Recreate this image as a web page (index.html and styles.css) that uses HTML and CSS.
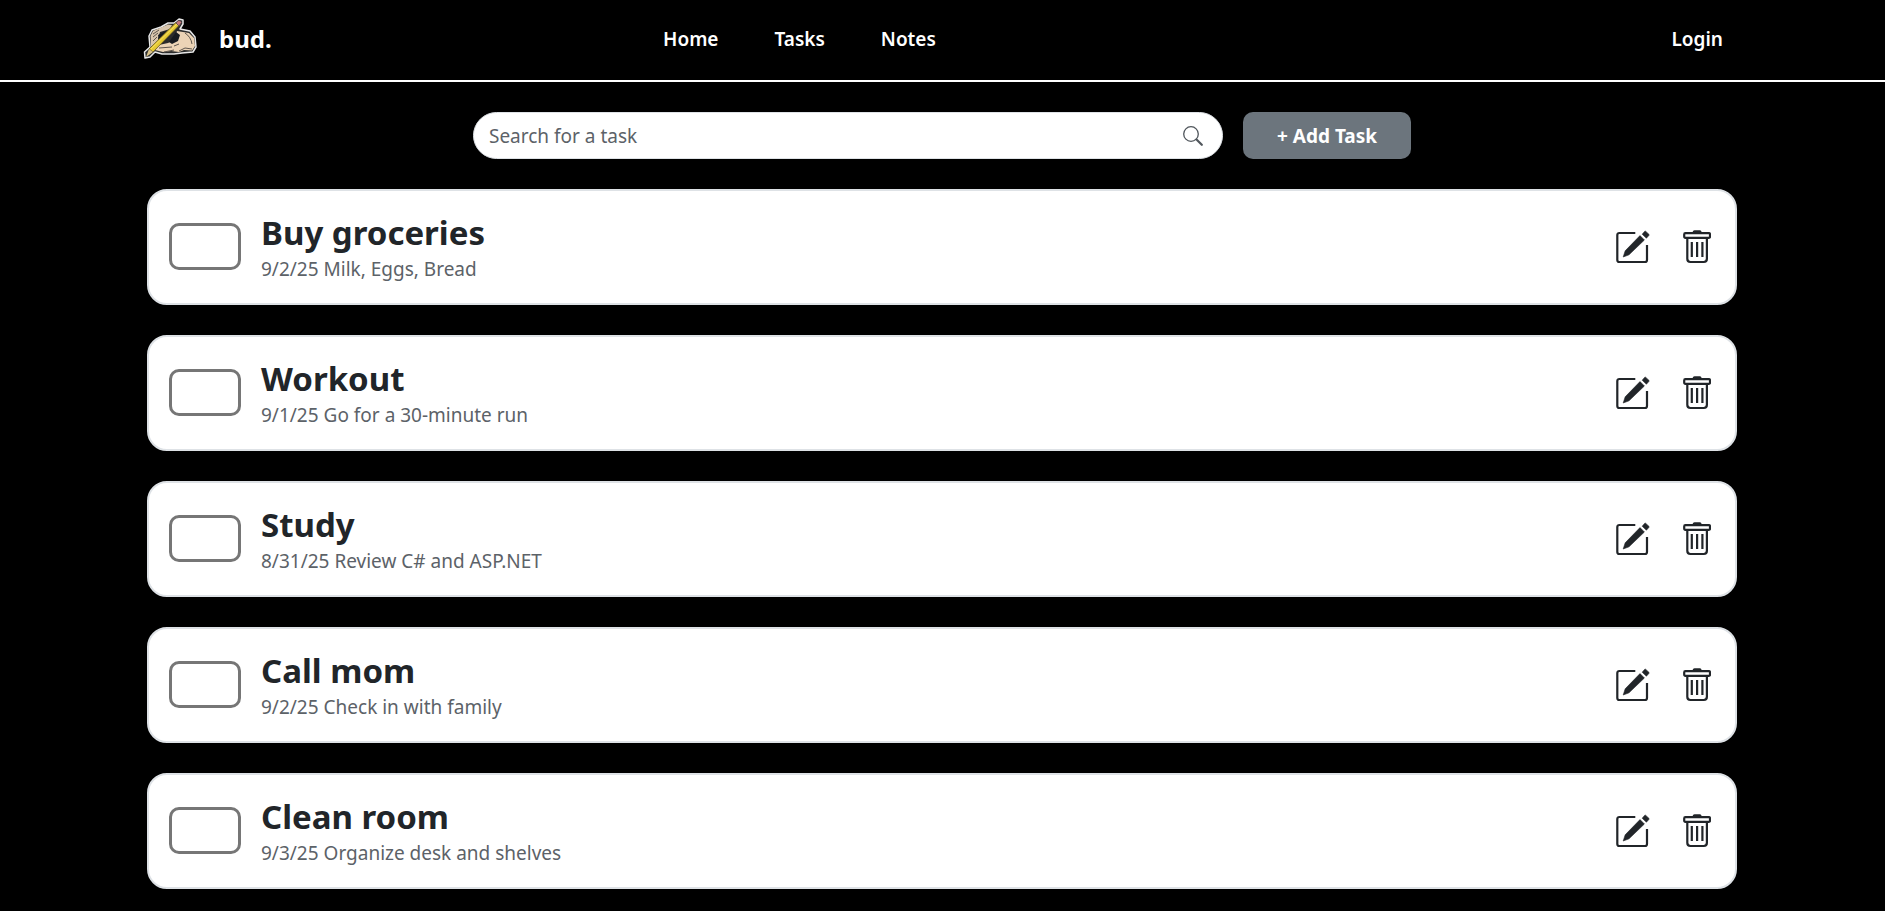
FILE: index.html
```
<!DOCTYPE html>
<html lang="en">
<head>
<meta charset="utf-8">
<meta name="viewport" content="width=device-width, initial-scale=1">
<title>bud.</title>
<link rel="stylesheet" href="styles.css">
</head>
<body>
<svg class="sprite" aria-hidden="true">
  <symbol id="edit" viewBox="0 0 34 34">
    <path d="M19.3 3H3.3a2 2 0 0 0-2 2v25a2 2 0 0 0 2 2H29a2 2 0 0 0 2-2V15" fill="none" stroke="currentColor" stroke-width="2.200"/>
    <path d="M24 5.600 28.400 10 13 24.800 7.200 27 9.200 20.800ZM26.200 4.200 28.600 1.400Q29.200.8 29.800 1.400L33 4.400Q33.400 5 32.800 5.600L30.400 8.200Z" fill="currentColor" stroke="currentColor" stroke-width=".6"/>
  </symbol>
  <symbol id="trash" viewBox="0 0 28 34">
    <path d="M9.400 3.200Q9.600.2 11.600.2H16.800Q18.600.2 18.800 3.200Z" fill="currentColor"/>
    <path d="M2.400 3.200H25.800Q27 3.200 27 4.400V6.600Q27 7.800 25.800 7.800H2.400Q1.200 7.800 1.200 6.600V4.400Q1.200 3.200 2.400 3.200ZM4.300 8V28.800Q4.300 32 7.400 32H20.800Q23.900 32 23.900 28.800V8M8.800 12V27M14.100 12V27M19.400 12V27" fill="none" stroke="currentColor" stroke-width="2.200"/>
  </symbol>
</svg>
<header class="topbar">
  <a class="brand" href="#">
    <svg class="logo" viewBox="0 0 60 48" aria-hidden="true">
      <path d="M4 43 3.500 37 9 32 8 21 11 15 20 12 27 8 33 8 38 4 42 5 42 9 39 14 49 16 54 22 55 32 52 37 41 38 33 39 21 39 14 37 9 42Z" fill="#2b2c2c" stroke="#e8e8e8" stroke-width="1.500" stroke-linejoin="round"/>
      <path d="M10 31 9.500 21 12 16 27 9.500 31 10 29 14 19 17 17 23 17 27 13 33Z" fill="#d9c6ad"/>
      <path d="M36 16 48 18 53 23 54 31 51 35.500 43 35 38 37 30 36 22 37 14 35 18 30 27 28 33 25Z" fill="#ecd4b6"/>
      <path d="M17 20 25 16 27 18 19 28ZM28 27 35 17 39 20 37 26 31 29Z" fill="#171b20"/>
      <path d="M12 19 18 15M12 22 17 18M12 26 16 22M13 30 16 27M18 33 31 32M23 37 33 35M38 36 44 33 51 34M33 31 38 29M44 18Q50 22 51 29" fill="none" stroke="#5d554d" stroke-width="1"/>
      <path d="M8 34 35 7.500 38 10.500 12 37Z" fill="#e6c932" stroke="#665725" stroke-width=".8"/>
      <path d="m10 34 26-25" stroke="#f5df65" stroke-width="1"/>
      <path d="M8 34 5 42 12 37Z" fill="#dbc38a"/>
      <path d="m35 8 2-2.500q3-.5 3.500 2L38 11Z" fill="#c5767b" stroke="#55474a" stroke-width=".8"/>
    </svg>
    <span>bud.</span>
  </a>
  <nav class="nav">
    <a href="#">Home</a>
    <a href="#">Tasks</a>
    <a href="#">Notes</a>
  </nav>
  <a class="login" href="#">Login</a>
</header>
<main class="page">
  <div class="toolbar">
    <form class="search" role="search">
      <input type="search" placeholder="Search for a task" aria-label="Search for a task">
      <button type="button" aria-label="Search">
        <svg viewBox="0 0 20 20" aria-hidden="true"><circle cx="8" cy="8" r="7.300" fill="none" stroke="currentColor" stroke-width="1.300"/><path d="m13.500 13.500 5.300 5.300" fill="none" stroke="currentColor" stroke-width="2.200" stroke-linecap="round"/></svg>
      </button>
    </form>
    <button class="add" type="button">+ Add Task</button>
  </div>
  <ul class="tasks">
    <li class="task">
      <input class="check" type="checkbox" id="t1">
      <div class="info"><label class="title" for="t1">Buy groceries</label><p class="note">9/2/25 Milk, Eggs, Bread</p></div>
      <div class="actions"><button type="button" aria-label="Edit"><svg class="edit"><use href="#edit"/></svg></button><button type="button" aria-label="Delete"><svg class="trash"><use href="#trash"/></svg></button></div>
    </li>
    <li class="task">
      <input class="check" type="checkbox" id="t2">
      <div class="info"><label class="title" for="t2">Workout</label><p class="note">9/1/25 Go for a 30-minute run</p></div>
      <div class="actions"><button type="button" aria-label="Edit"><svg class="edit"><use href="#edit"/></svg></button><button type="button" aria-label="Delete"><svg class="trash"><use href="#trash"/></svg></button></div>
    </li>
    <li class="task">
      <input class="check" type="checkbox" id="t3">
      <div class="info"><label class="title" for="t3">Study</label><p class="note">8/31/25 Review C# and ASP.NET</p></div>
      <div class="actions"><button type="button" aria-label="Edit"><svg class="edit"><use href="#edit"/></svg></button><button type="button" aria-label="Delete"><svg class="trash"><use href="#trash"/></svg></button></div>
    </li>
    <li class="task">
      <input class="check" type="checkbox" id="t4">
      <div class="info"><label class="title" for="t4">Call mom</label><p class="note">9/2/25 Check in with family</p></div>
      <div class="actions"><button type="button" aria-label="Edit"><svg class="edit"><use href="#edit"/></svg></button><button type="button" aria-label="Delete"><svg class="trash"><use href="#trash"/></svg></button></div>
    </li>
    <li class="task">
      <input class="check" type="checkbox" id="t5">
      <div class="info"><label class="title" for="t5">Clean room</label><p class="note">9/3/25 Organize desk and shelves</p></div>
      <div class="actions"><button type="button" aria-label="Edit"><svg class="edit"><use href="#edit"/></svg></button><button type="button" aria-label="Delete"><svg class="trash"><use href="#trash"/></svg></button></div>
    </li>
  </ul>
</main>
</body>
</html>
```
FILE: styles.css
```
* {
  box-sizing: border-box;
}

body {
  margin: 0;
  background: #000;
  color: #212529;
  font-family: "Segoe UI", "Noto Sans", sans-serif;
  font-size: 19px;
  line-height: 28px;
}

button,
input {
  font: inherit;
}

.sprite {
  position: absolute;
  width: 0;
  height: 0;
}

.topbar {
  display: flex;
  align-items: center;
  padding: 15px 162px 17px 141px;
  border-bottom: 2px solid #fff;
  font-weight: 600;
}

.topbar a {
  color: #fff;
  text-decoration: none;
}

.brand {
  display: flex;
  flex: 0 0 33%;
  align-items: center;
  gap: 18px;
  font-size: 24px;
  font-weight: 700;
}

.logo {
  width: 60px;
  height: 48px;
}

.nav {
  display: flex;
  flex: 1;
  gap: 56px;
}

.page {
  padding: 30px 148px 0 147px;
}

.toolbar {
  display: flex;
  justify-content: center;
  gap: 20px;
  margin-bottom: 30px;
}

.search {
  display: flex;
  flex: 0 1 750px;
  align-items: center;
  padding: 0 19px 0 15px;
  border: 1px solid #dee2e6;
  border-radius: 24px;
  background: #fff;
}

.search input {
  flex: 1;
  min-width: 0;
  padding: 0;
  border: 0;
  outline: 0;
  background: none;
  color: #212529;
}

.search input::placeholder {
  color: #5c6268;
  opacity: 1;
}

.search button {
  display: flex;
  padding: 0;
  border: 0;
  background: none;
  color: #50565c;
}

.search svg {
  width: 20px;
  height: 20px;
}

.add {
  height: 47px;
  padding: 0 34px;
  border: 0;
  border-radius: 10px;
  background: #6c757d;
  color: #fff;
  font-weight: 700;
}

.tasks {
  display: grid;
  gap: 30px;
  margin: 0;
  padding: 0;
  list-style: none;
}

.task {
  display: flex;
  align-items: center;
  gap: 20px;
  padding: 20px;
  border: 2px solid #dee2e6;
  border-radius: 20px;
  background: #fff;
}

.check {
  flex: none;
  width: 72px;
  height: 47px;
  margin: 0 0 1px;
  border: 3px solid #767676;
  border-radius: 10px;
  background: #fff;
  appearance: none;
}

.check:checked {
  background: #767676;
}

.info {
  flex: 1;
  min-width: 0;
}

.title {
  display: block;
  font-size: 33px;
  font-weight: 700;
  line-height: 44px;
}

.note {
  margin: 0;
  color: #5c6268;
}

.actions {
  display: flex;
  gap: 33px;
  padding-right: 4px;
}

.actions button {
  display: flex;
  padding: 0;
  border: 0;
  background: none;
  color: #212529;
}

.edit {
  width: 34px;
  height: 34px;
}

.trash {
  width: 28px;
  height: 34px;
}
```
